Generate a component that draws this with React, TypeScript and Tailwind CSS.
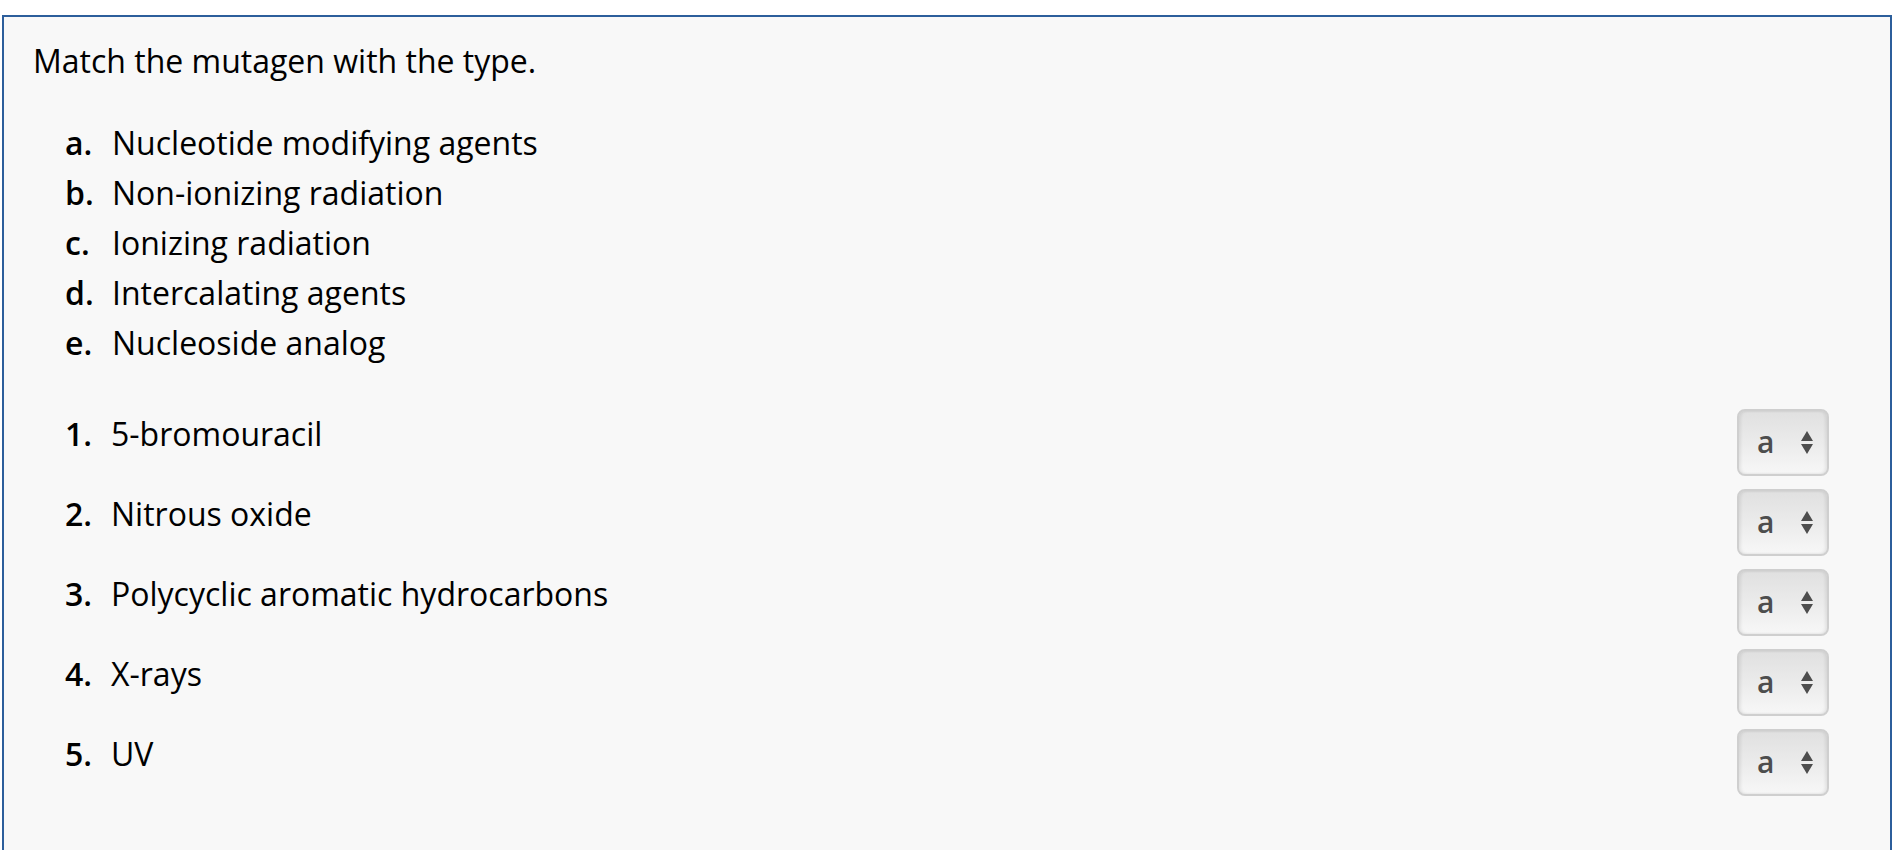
import React from "react";

const types = [
    ["a.", "Nucleotide modifying agents"],
    ["b.", "Non-ionizing radiation"],
    ["c.", "Ionizing radiation"],
    ["d.", "Intercalating agents"],
    ["e.", "Nucleoside analog"],
];

const mutagens = ["5-bromouracil", "Nitrous oxide", "Polycyclic aromatic hydrocarbons", "X-rays", "UV"];

function FakeSelect() {
    return (
        <div className="flex items-center justify-between w-[92px] h-[67px] pl-[18px] pr-[13px] rounded-[8px] border-2 border-[#cfcfcf] bg-gradient-to-b from-[#e0e0e0] via-[#ebebeb] to-[#f7f7f7] shadow-[inset_2px_0_3px_rgba(0,0,0,0.07),inset_-2px_0_3px_rgba(0,0,0,0.07)] text-[#4d4d4d]">
            <span className="text-[30px] leading-none pb-[2px] font-semibold">a</span>
            <svg width="14" height="26" viewBox="0 0 14 26" className="fill-[#4d4d4d]">
                <polygon points="7,1 13,11 1,11" />
                <polygon points="1,14 13,14 7,24" />
            </svg>
        </div>
    );
}

export default function App() {
    return (
        <div className="pt-[15px] px-[2px] bg-white min-h-screen">
            <div className="border-2 border-[#2c5e9b] bg-[#f8f8f8] min-h-[900px] pl-[29px] pr-[61px] pt-[19px] text-black font-['Open_Sans',sans-serif] text-[32px] leading-[50px]">
                <p>Match the mutagen with the type.</p>

                <div className="mt-[32px] pl-[32px]">
                    {types.map(([label, text]) => (
                        <div key={label} className="flex">
                            <span className="w-[47px] font-semibold">{label}</span>
                            <span>{text}</span>
                        </div>
                    ))}
                </div>

                <div className="mt-[41px] pl-[32px] flex flex-col gap-[13px]">
                    {mutagens.map((text, i) => (
                        <div key={text} className="flex items-start justify-between">
                            <div className="flex">
                                <span className="w-[46px] font-semibold">{i + 1}.</span>
                                <span>{text}</span>
                            </div>
                            <FakeSelect />
                        </div>
                    ))}
                </div>
            </div>
        </div>
    );
}
